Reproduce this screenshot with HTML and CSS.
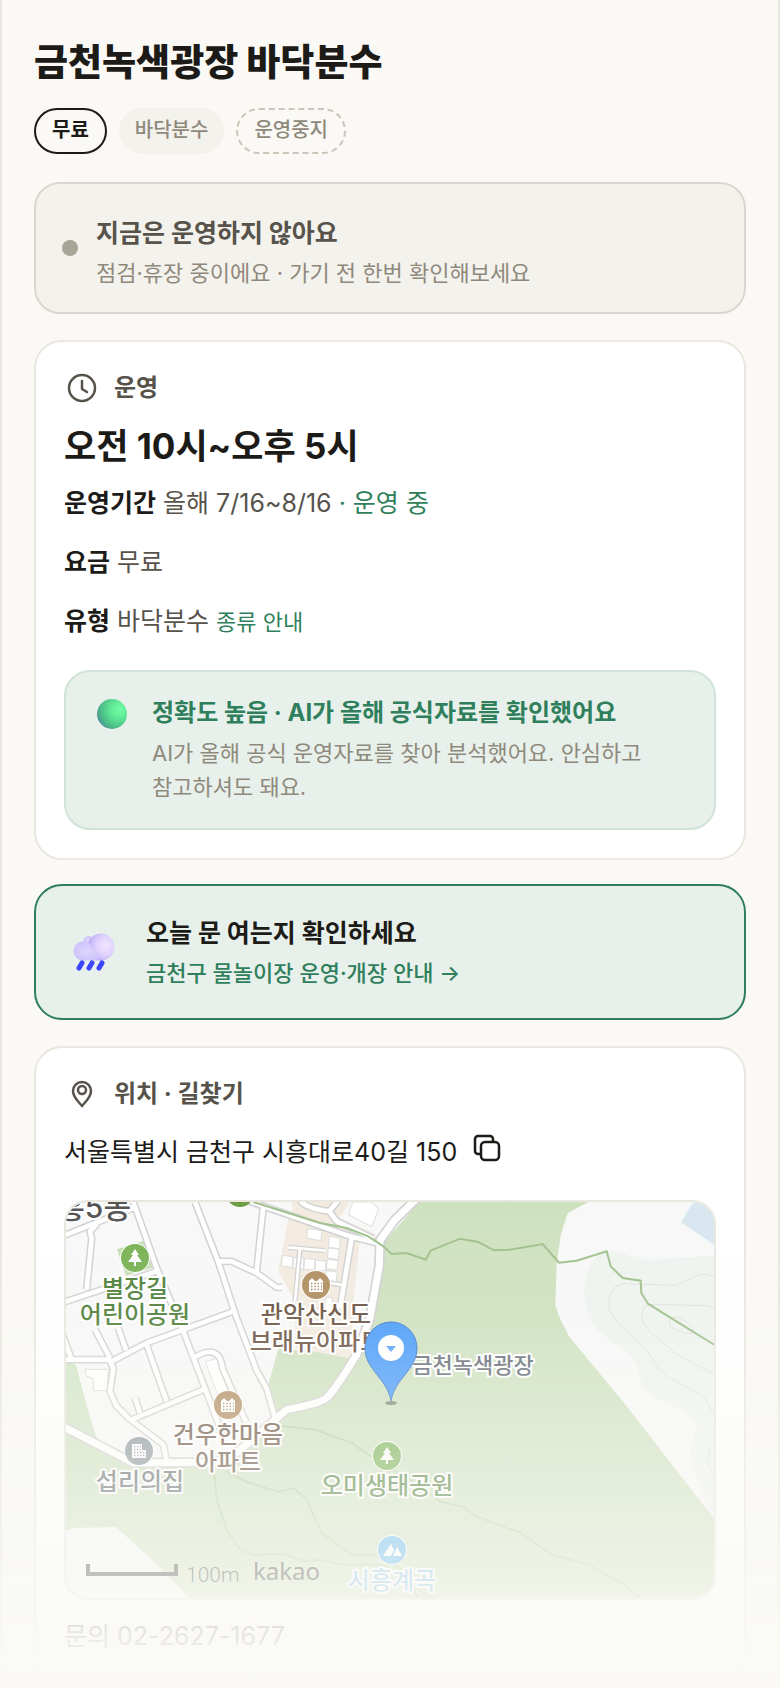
FILE: index.html
```
<!DOCTYPE html>
<html lang="ko">
<head>
    <meta charset="UTF-8">
    <meta name="viewport" content="width=device-width, initial-scale=1">
    <title>금천녹색광장 바닥분수</title>
    <link rel="stylesheet" href="styles.css">
</head>
<body>
    <main class="page">
        <h1 class="title">금천녹색광장 바닥분수</h1>
        <div class="chips">
            <span class="chip chip-free">무료</span>
            <span class="chip chip-type">바닥분수</span>
            <span class="chip chip-stop">운영중지</span>
        </div>

        <section class="status">
            <span class="status-dot"></span>
            <div class="status-text">
                <p class="status-title">지금은 운영하지 않아요</p>
                <p class="status-sub">점검·휴장 중이에요 · 가기 전 한번 확인해보세요</p>
            </div>
        </section>

        <section class="card">
            <h2 class="card-head">
                <svg class="head-icon" viewBox="0 0 36 36" fill="none" stroke="currentColor" stroke-width="2.5" stroke-linecap="round" stroke-linejoin="round">
                    <circle cx="18" cy="18" r="13"/>
                    <path d="M18 11v8l5 3"/>
                </svg>
                운영
            </h2>
            <p class="hours">오전 10시~오후 5시</p>
            <p class="row"><b>운영기간</b> 올해 7/16~8/16 <span class="open">· 운영 중</span></p>
            <p class="row"><b>요금</b> 무료</p>
            <p class="row"><b>유형</b> 바닥분수 <a class="kind-link" href="#kinds">종류 안내</a></p>

            <div class="notice">
                <svg class="notice-icon" viewBox="0 0 44 36">
                    <defs>
                        <radialGradient id="ball" cx="0.75" cy="0.35" r="0.75">
                            <stop offset="0" stop-color="#70ffa5"/>
                            <stop offset="0.4" stop-color="#5fe795"/>
                            <stop offset="0.85" stop-color="#49b985"/>
                            <stop offset="1" stop-color="#4f9b95"/>
                        </radialGradient>
                    </defs>
                    <circle cx="22" cy="18" r="15" fill="url(#ball)"/>
                </svg>
                <div>
                    <p class="notice-title">정확도 높음 · AI가 올해 공식자료를 확인했어요</p>
                    <p class="notice-sub">AI가 올해 공식 운영자료를 찾아 분석했어요. 안심하고 참고하셔도 돼요.</p>
                </div>
            </div>
        </section>

        <a class="guide" href="#guide">
            <svg class="guide-icon" viewBox="0 0 60 60">
                <defs>
                    <radialGradient id="puffBig" cx="0.68" cy="0.45" r="0.62">
                        <stop offset="0" stop-color="#f1e6ff"/>
                        <stop offset="0.6" stop-color="#ddd0fd"/>
                        <stop offset="1" stop-color="#bfb2f6"/>
                    </radialGradient>
                    <radialGradient id="puffSmall" cx="0.5" cy="0.5" r="0.7">
                        <stop offset="0" stop-color="#ded7ff"/>
                        <stop offset="0.7" stop-color="#cfc4fb"/>
                        <stop offset="1" stop-color="#b5adf3"/>
                    </radialGradient>
                </defs>
                <circle cx="25" cy="20" r="6" fill="url(#puffSmall)"/>
                <circle cx="37" cy="25" r="13.500" fill="url(#puffBig)"/>
                <path d="M19 19.500a9.500 9.500 0 0 1 9 6l9 13H19a9.500 9.500 0 0 1 0-19z" fill="url(#puffSmall)"/>
                <path d="M18 41l-3 5M28 41l-3 5M38 41l-3 5" stroke="#3d45ff" stroke-width="5" stroke-linecap="round"/>
            </svg>
            <span class="guide-text">
                <strong class="guide-title">오늘 문 여는지 확인하세요</strong>
                <span class="guide-sub">금천구 물놀이장 운영·개장 안내 →</span>
            </span>
        </a>

        <section class="card">
            <h2 class="card-head">
                <svg class="head-icon" viewBox="0 0 36 36" fill="none" stroke="currentColor" stroke-width="2.5" stroke-linecap="round" stroke-linejoin="round">
                    <path d="M18 30c-2-3-9-8-9-15a9 9 0 0 1 18 0c0 7-7 12-9 15z"/>
                    <circle cx="18" cy="14" r="4"/>
                </svg>
                위치 · 길찾기
            </h2>
            <div class="address">
                <span>서울특별시 금천구 시흥대로40길 150</span>
                <button class="copy" type="button" aria-label="주소 복사">
                    <svg viewBox="0 0 28 28" fill="none" stroke="currentColor" stroke-width="2.5" stroke-linejoin="round">
                        <path d="M7 20H5a3 3 0 0 1-3-3V5a3 3 0 0 1 3-3h12a3 3 0 0 1 3 3v3"/>
                        <rect x="8" y="8" width="18" height="18" rx="4"/>
                    </svg>
                </button>
            </div>

            <svg class="map" viewBox="0 0 648 396" preserveAspectRatio="xMidYMid slice" role="img" aria-label="지도">
                <defs>
                    <linearGradient id="pin" x1="0" y1="0" x2="0" y2="1">
                        <stop offset="0" stop-color="#4a9dfa"/>
                        <stop offset="1" stop-color="#4c9dfa"/>
                    </linearGradient>
                    <g id="tree">
                        <circle r="15" fill="#fff"/>
                        <circle r="14"/>
                        <path d="M0-9l4 6H2l5 7H1v4h-2V4h-6l5-7h-2z" fill="#fff"/>
                    </g>
                    <g id="apt">
                        <circle r="15" fill="#fff"/>
                        <circle r="14"/>
                        <path d="M-7 7V-4l3-3 3 3h2l3-3 3 3V7z" fill="#fff"/>
                        <path d="M-5-1.500H6M-5 1.500H6M-5 4.500H6" stroke="#a5845a" stroke-width="1.400" stroke-dasharray="1.400 1.900"/>
                    </g>
                    <!-- 도로는 테두리와 면을 두 번 그린다 -->
                    <g id="roads">
                        <path d="M387 0L457 180L512 348L572 505L602 560L627 648"/>
                        <path d="M202 0L272 198L352 388L432 598L470 700"/>
                        <path d="M-10 102L202 18M94 65L72 88L77 110L62 262M-10 302L272 208"/>
                        <path d="M137 478L242 423L502 328M-10 473H130L142 500L132 568L150 610L187 648L292 728L304 783"/>
                        <path d="M-10 400L16 470M87 383L132 468M157 378L180 445M242 428L302 598M197 653L412 563M207 588L222 633"/>
                        <path d="M382 468Q460 420 470 500L540 660"/>
                        <path d="M592 13L572 208M462 178L497 178L572 213L632 256H648"/>
                        <path d="M542 -5L852 103L942 125M857 108L822 320"/>
                        <path d="M702 -5Q720 20 790 28L817 -5M790 28L812 58L922 110"/>
                    </g>
                    <path id="mainRoad" d="M1052 -10L987 53L942 115L940 190L912 348L872 458Q810 560 782 588Q760 605 662 623L512 753L452 780L202 783L-10 673"/>
                    <path id="lanes" d="M667 136L777 146M702 138L687 298M792 243L837 250"/>
                </defs>

                <!-- 지형 (3배 좌표) -->
                <g transform="scale(0.333333)">
                    <rect width="1944" height="1188" fill="#f8f8f8"/>
                    <path d="M1060 0L952 123L937 240L882 458L637 440L607 548L627 650L587 678L452 783L202 783L0 678V1188H1944V0z" fill="#cfe2c0"/>
                    <path d="M0 478L30 488L64 618L100 735L0 683z" fill="#d3e5c6"/>
                    <path d="M153 142L240 115L265 195L180 222z" fill="#c9e0b6"/>
                    <path d="M0 986L22 978L150 975L252 1068L372 1190H0zM1567 0L1505 33L1484 98L1472 188L1468 308L1479 343L1509 403L1682 613L1944 950V0z" fill="#f8f8f8"/>
                    <path d="M1577 183Q1600 148 1632 148C1690 152 1710 175 1762 173L1944 161V948L1917 898L1872 758C1865 720 1900 690 1892 668C1870 610 1760 600 1732 558C1710 480 1700 460 1682 448C1640 420 1610 400 1582 368Q1530 280 1577 183z" fill="#eff4f0"/>
                    <path d="M1882 0L1845 61L1944 128V0z" fill="#d9e7f0"/>
                    <path d="M667 48L882 110L862 300L857 470L687 438V298L637 208zM677 0H852L822 48L927 95V115L682 40z" fill="#f3ebe0"/>

                    <g fill="none" stroke="#dfe3e0" stroke-width="3">
                        <path d="M1944 225Q1910 210 1890 222L1830 250L1670 245L1647 255L1630 283V325L1655 363L1744 445L1775 500L1810 527L1917 585L1944 640"/>
                        <path d="M1944 317L1922 311L1755 307L1734 315L1726 350L1750 388L1830 455L1944 517M1810 348L1840 346L1870 365L1883 380L1880 394L1855 394L1812 375zM1944 720Q1908 760 1944 825"/>
                    </g>

                    <g fill="#fff" stroke="#dcdcdc" stroke-width="3">
                        <path d="M860 0L847 38L917 74L938 20L915 0zM725 80L767 86L765 116L722 108zM790 103L823 108L820 140L787 136zM787 138L820 142L817 172L784 168zM784 172L817 176L813 204L781 200zM650 160L682 164L678 196L646 192zM684 166L714 168L712 202L680 198zM716 170L747 172L745 204L713 202zM749 174L780 178L778 206L747 206zM781 206L814 210L810 240L779 236zM780 285L800 288L796 330L776 326z"/>
                        <path d="M57 502H126V566H82V530L60 522zM418 480L453 468L500 590L465 606z"/>
                    </g>

                    <g fill="none" stroke-linejoin="round">
                        <g stroke="#d2d2d2">
                            <use href="#roads" stroke-width="23"/>
                            <use href="#lanes" stroke-width="16"/>
                            <use href="#mainRoad" stroke-width="31"/>
                        </g>
                        <g stroke="#fff">
                            <use href="#roads" stroke-width="14"/>
                            <use href="#lanes" stroke-width="8"/>
                            <use href="#mainRoad" stroke-width="21"/>
                        </g>
                    </g>

                    <path d="M562 0L762 63L842 78L907 103L952 133L977 156L1022 153L1079 173L1094 146L1182 110L1237 120L1284 145L1332 143L1430 126L1479 182L1532 176L1622 148L1634 193L1670 228L1724 236L1726 273L1746 305L1944 428" fill="none" stroke="#a0c18d" stroke-width="6"/>
                    <g fill="none" stroke="#b4cfa4" stroke-width="5">
                        <path d="M627 670L747 683L857 723L922 768L982 803L1042 838L1122 898L1192 915L1232 943L1307 973L1362 991L1457 1058L1570 1088L1682 1153L1724 1190"/>
                        <path d="M482 808L532 836L637 870L682 858L722 893L767 993L857 1058L932 1061L1002 1100L1060 1190"/>
                        <path d="M442 790L452 893L482 983L522 1043L562 1058L652 1056L717 1078L762 1073L832 1088L952 1088L1099 1190"/>
                    </g>
                </g>

                <!-- 장소 표시 -->
                <circle cx="174" cy="-9" r="14" fill="#6f9d44"/>
                <use href="#tree" x="69" y="56" fill="#7ab356"/>
                <use href="#apt" x="250" y="83" fill="#b18f62"/>
                <use href="#apt" x="162" y="203" fill="#b18f62"/>
                <use href="#tree" x="321" y="254" fill="#7ab356"/>
                <g transform="translate(73 249)">
                    <circle r="15" fill="#fff"/>
                    <circle r="14" fill="#8b979c"/>
                    <path d="M-7 7V-7H3v6h4v8z" fill="#fff"/>
                    <path d="M-5-4.500H2M-5-1.500H2M-5 1.500H6M-5 4.500H6" stroke="#8b979c" stroke-width="1.400" stroke-dasharray="1.400 1.600"/>
                </g>
                <g transform="translate(326 348)">
                    <circle r="15" fill="#fff"/>
                    <circle r="14" fill="#55b3ee"/>
                    <path d="M-9 6L-1-6L2 0L-1 6zM1 6L5-3L10 6z" fill="#fff"/>
                </g>

                <g class="map-labels">
                    <text class="map-dong" x="65" y="16">흥5동</text>
                    <text class="map-park" x="69" y="95">별장길</text>
                    <text class="map-park" x="69" y="121">어린이공원</text>
                    <text class="map-apt" x="250" y="121">관악산신도</text>
                    <text class="map-apt" x="250" y="148">브래뉴아파트</text>
                    <text class="map-apt" x="162" y="241">건우한마음</text>
                    <text class="map-apt" x="162" y="268">아파트</text>
                    <text class="map-house" x="74" y="288">섭리의집</text>
                    <text class="map-park" x="321" y="292">오미생태공원</text>
                    <text class="map-valley" x="326" y="387">시흥계곡</text>
                    <text class="map-plaza" x="407" y="171">금천녹색광장</text>
                </g>

                <!-- 현재 장소 핀 -->
                <ellipse cx="325" cy="201" rx="6" ry="2" fill="#7d8a76"/>
                <path d="M325 199C321 176 299 168 299 146a26 26 0 0 1 52 0C351 168 329 176 325 199z" fill="url(#pin)" stroke="#4179c9"/>
                <circle cx="325" cy="146" r="13" fill="#fff"/>
                <path d="M320 144h10l-5 6z" fill="#58a5fb"/>

                <path d="M22 362V372H110V362" fill="none" stroke="#333" stroke-width="4"/>
                <text class="map-scale" x="120" y="380">100m</text>
                <text class="map-brand" x="187" y="378">kakao</text>
            </svg>

            <p class="contact">문의 02-2627-1677</p>
        </section>
    </main>
    <div class="fade"></div>
</body>
</html>
```
FILE: styles.css
```
:root {
    --bg: #faf9f5;
    --ink: #1c1b18;
    --ink-mid: #57534b;
    --ink-soft: #8f897c;
    --line: #e9e7e0;
    --green: #2f7f5c;
    --green-bg: #e7f0ea;
}

* {
    margin: 0;
    padding: 0;
    box-sizing: border-box;
}

body {
    background: var(--bg);
    color: var(--ink);
    font-family: Inter, 'Noto Sans CJK KR', sans-serif;
    font-size: 25px;
    word-break: keep-all;
}

.page {
    height: 100vh;
    overflow: hidden;
    padding: 32px 32px 0;
    border: solid var(--line);
    border-width: 0 2px;
}

.title {
    font-size: 37px;
    line-height: 62px;
    font-weight: 800;
}

/* 태그 */
.chips {
    display: flex;
    gap: 12px;
    margin: 14px 0 28px;
}

.chip {
    height: 46px;
    padding: 0 16px;
    border: 2px solid transparent;
    border-radius: 23px;
    font-size: 20px;
    line-height: 40px;
    font-weight: 500;
    color: var(--ink-soft);
}

.chip-free {
    border-color: var(--ink);
    color: var(--ink);
    font-weight: 700;
}

.chip-type {
    border-width: 2px 0;
    background: #f3f2ed;
}

.chip-stop {
    border: 2px dashed #c9c6ba;
}

/* 운영 상태 */
.status {
    display: flex;
    align-items: center;
    gap: 18px;
    padding: 19px 26px;
    border: 2px solid #d9d8cf;
    border-radius: 26px;
    background: #f3f2ed;
}

.status-dot {
    width: 16px;
    height: 16px;
    border-radius: 50%;
    background: #a8a496;
}

.status-text {
    padding-top: 10px;
}

.status-title {
    font-size: 25px;
    line-height: 40px;
    font-weight: 700;
    color: var(--ink-mid);
}

.status-sub {
    font-size: 22px;
    line-height: 40px;
    color: var(--ink-soft);
}

/* 카드 */
.card {
    margin-top: 26px;
    padding: 28px;
    border: 2px solid var(--line);
    border-radius: 28px;
    background: #fff;
}

.card-head {
    display: flex;
    align-items: center;
    gap: 14px;
    font-size: 24px;
    line-height: 36px;
    font-weight: 700;
    color: var(--ink-mid);
}

.head-icon {
    width: 36px;
    height: 36px;
}

.hours {
    margin: 16px 0 13px;
    font-size: 35px;
    line-height: 48px;
    font-weight: 700;
}

.row {
    margin-bottom: 19px;
    line-height: 40px;
    color: var(--ink-mid);
}

.row b {
    color: var(--ink);
}

.open,
.kind-link {
    color: var(--green);
}

.kind-link {
    font-size: 22px;
    text-decoration: none;
}

.notice {
    display: flex;
    gap: 18px;
    margin-top: 28px;
    padding: 24px;
    border: 2px solid #cfe3d8;
    border-radius: 26px;
    background: var(--green-bg);
}

.notice-icon {
    flex: none;
    width: 44px;
    height: 36px;
}

.notice-title {
    margin-bottom: 6px;
    font-size: 24px;
    line-height: 34px;
    font-weight: 700;
    color: var(--green);
}

.notice-sub {
    max-width: 500px;
    font-size: 22px;
    line-height: 34px;
    color: var(--ink-soft);
}

/* 개장 안내 */
.guide {
    display: flex;
    align-items: center;
    gap: 22px;
    margin-top: 24px;
    padding: 26px 28px;
    border: 2px solid var(--green);
    border-radius: 28px;
    background: var(--green-bg);
    color: var(--green);
    text-decoration: none;
}

.guide-icon {
    width: 60px;
    height: 60px;
}

.guide-text {
    display: grid;
}

.guide-title {
    font-size: 25px;
    line-height: 42px;
    font-weight: 700;
    color: var(--ink);
}

.guide-sub {
    font-size: 22px;
    line-height: 38px;
    font-weight: 500;
}

/* 위치 */
.address {
    display: flex;
    align-items: flex-start;
    gap: 16px;
    margin: 18px 0 26px;
    line-height: 44px;
}

.copy {
    width: 28px;
    height: 28px;
    margin-top: 4px;
    border: 0;
    background: none;
    color: var(--ink);
    cursor: pointer;
}

.copy svg {
    display: block;
}

.map {
    display: block;
    width: 100%;
    height: 400px;
    border: 2px solid var(--line);
    border-radius: 24px;
}

.map-labels text {
    font-size: 24px;
    font-weight: 500;
    text-anchor: middle;
    paint-order: stroke;
    stroke: #fff;
    stroke-width: 4px;
    stroke-linejoin: round;
}

.map-labels .map-dong {
    font-size: 30px;
    text-anchor: end;
    fill: #555;
}

.map-park { fill: #50813b; }
.map-apt { fill: #6b5444; }
.map-house { fill: #616a70; }
.map-valley { fill: #7fbfe8; }

.map-labels .map-plaza {
    font-size: 22px;
    fill: #656d78;
}

.map-scale {
    font-family: Roboto, sans-serif;
    font-size: 21px;
    font-weight: 300;
    fill: #333;
}

.map-brand {
    font-family: 'Noto Sans', sans-serif;
    font-size: 24px;
    fill: #333;
}

.contact {
    margin-top: 16px;
    line-height: 40px;
    color: var(--ink-mid);
}

.fade {
    position: fixed;
    inset: auto 0 0;
    height: 488px;
    background: linear-gradient(rgba(250, 249, 245, 0), rgba(250, 249, 245, 0.08) 22%, rgba(250, 249, 245, 0.38) 47%, rgba(250, 249, 245, 0.72) 77%, rgba(250, 249, 245, 0.9) 90%, #faf9f5);
    pointer-events: none;
}
```
